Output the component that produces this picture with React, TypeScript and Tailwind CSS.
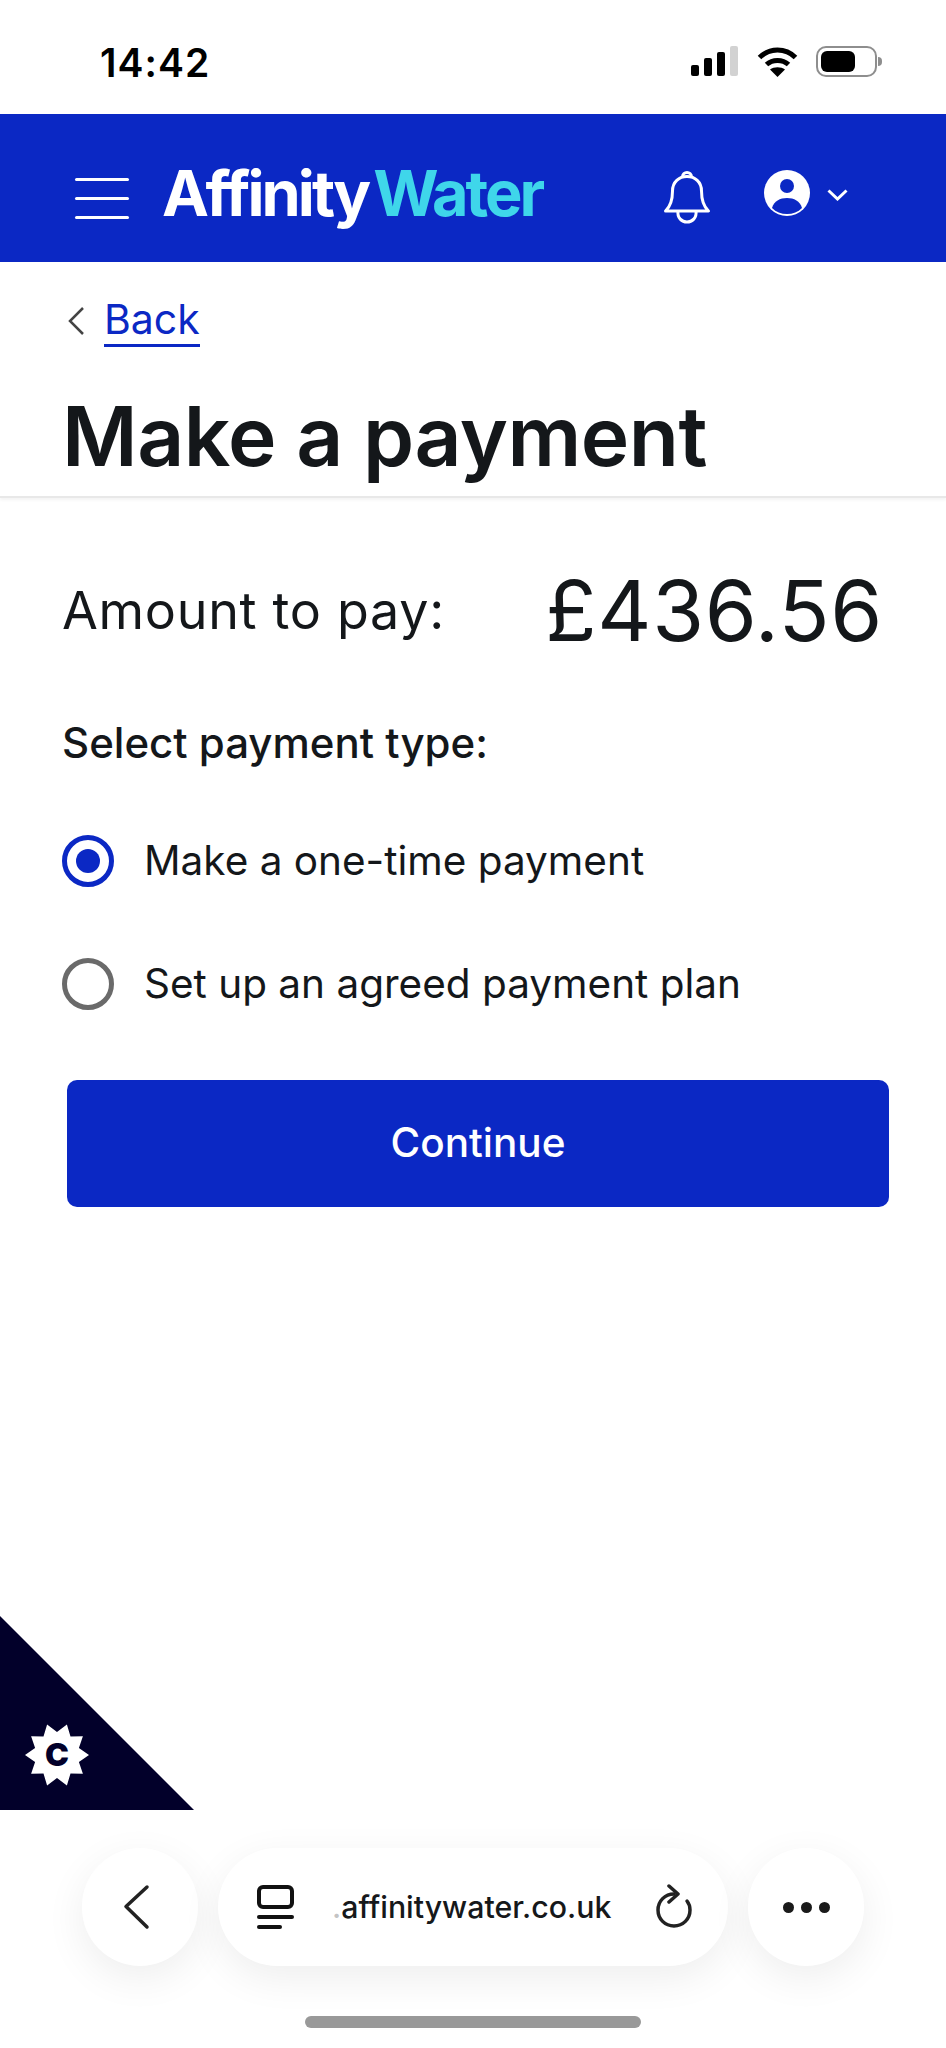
const starPoints = Array.from({ length: 20 }, (_, i) => {
  const r = i % 2 === 0 ? 32 : 23;
  const a = (i * Math.PI) / 10;
  return `${(34 + r * Math.cos(a)).toFixed(1)},${(34 + r * Math.sin(a)).toFixed(1)}`;
}).join(" ");

const StatusBar = () => (
  <div className="flex h-[114px] items-center justify-between pl-[100px] pr-[64px] pt-[8px]">
    <span className="mt-[2px] text-[39px] font-semibold leading-none tracking-[1px] text-black">14:42</span>
    <div className="flex items-center">
      {/* signal */}
      <div className="flex h-[30px] items-end gap-[5px]">
        <div className="h-[11px] w-[8px] rounded-[2px] bg-black" />
        <div className="h-[18px] w-[8px] rounded-[2px] bg-black" />
        <div className="h-[24px] w-[8px] rounded-[2px] bg-black" />
        <div className="h-[30px] w-[8px] rounded-[2px] bg-[#d2d2d2]" />
      </div>
      {/* wifi */}
      <svg width="41" height="31" viewBox="0 0 41 31" className="ml-[19px]" fill="none">
        <path d="M2.5 11.5C12.5 1.5 28.5 1.5 38.5 11.5" stroke="#000" strokeWidth="5" />
        <path d="M9.5 18.5C15.5 13 25.5 13 31.5 18.5" stroke="#000" strokeWidth="5" />
        <path d="M13 23.5C17 20.5 24 20.5 28 23.5L20.5 31Z" fill="#000" />
      </svg>
      {/* battery */}
      <div className="ml-[18px] flex items-center">
        <div className="flex h-[31px] w-[61px] items-center rounded-[10px] border-[2px] border-[#8e8e8e] p-[3px]">
          <div className="h-[21px] w-[34px] rounded-[6px] bg-black" />
        </div>
        <div className="ml-[1px] h-[9px] w-[4px] rounded-r-full bg-[#8e8e8e]" />
      </div>
    </div>
  </div>
);

const Header = () => (
  <header className="flex h-[148px] items-center bg-[#0b28c4] pl-[75px] pt-[10px]">
    <div className="mt-[10px] flex w-[54px] flex-col gap-[16px]">
      <div className="h-[3px] rounded-full bg-white" />
      <div className="h-[3px] rounded-full bg-white" />
      <div className="h-[3px] rounded-full bg-white" />
    </div>
    <div className="ml-[33px] flex text-[63px] font-bold leading-none tracking-[-3px]">
      <span className="text-white">Affinity</span>
      <span className="ml-[5px] text-[#3fd6ea]">Water</span>
    </div>
    <svg width="48" height="54" viewBox="0 0 48 54" fill="none" stroke="#fff" strokeWidth="3" className="ml-[121px] mt-[8px]">
      <path d="M2.5 41C8 36 9.5 29 9.5 21C9.5 12 16 6.5 24 6.5C32 6.5 38.5 12 38.5 21C38.5 29 40 36 45.5 41Z" strokeLinejoin="round" />
      <path d="M19.5 7C19.5 1 28.5 1 28.5 7" />
      <path d="M15 41C14 48 19 52 24 52C29 52 34 48 33 41" />
    </svg>
    <svg width="46" height="46" viewBox="0 0 46 46" className="ml-[53px]">
      <circle cx="23" cy="23" r="23" fill="#fff" />
      <circle cx="23" cy="16" r="7" fill="#0b28c4" />
      <path d="M8 38C10 31 16 28 23 28C30 28 36 31 38 38C34 42 29 44 23 44C17 44 12 42 8 38Z" fill="#0b28c4" />
    </svg>
    <svg width="21" height="12" viewBox="0 0 21 12" fill="none" stroke="#fff" strokeWidth="3" className="ml-[17px] mt-[4px]">
      <path d="M1.5 1.5L10.5 10L19.5 1.5" />
    </svg>
  </header>
);

const Radio = ({ checked, label }: { checked?: boolean; label: string }) => (
  <div className="flex items-center">
    <div
      className={`flex h-[52px] w-[52px] items-center justify-center rounded-full border-[5px] ${
        checked ? "border-[#0b28c4]" : "border-[#6a6a6a]"
      }`}
    >
      {checked && <div className="h-[24px] w-[24px] rounded-full bg-[#0b28c4]" />}
    </div>
    <span className="ml-[30px] text-[40.5px] leading-[52px] text-[#14171a]">{label}</span>
  </div>
);

const BrowserBar = () => (
  <div className="absolute inset-x-0 bottom-0 flex h-[200px] flex-col items-center">
    <div className="flex h-[118px] items-stretch gap-[20px]">
      <div className="flex w-[116px] items-center justify-center rounded-full bg-white shadow-[0_12px_40px_rgba(0,0,0,0.07)]">
        <svg width="30" height="46" viewBox="0 0 30 46" fill="none" stroke="#222" strokeWidth="3.5" strokeLinecap="round" strokeLinejoin="round" className="mr-[8px]">
          <path d="M26 3L5 22.5L26 43" />
        </svg>
      </div>
      <div className="flex w-[510px] items-center rounded-full bg-white pl-[39px] shadow-[0_12px_40px_rgba(0,0,0,0.07)]">
        <div className="flex w-[37px] flex-col">
          <div className="h-[24px] rounded-[6px] border-[4px] border-[#111]" />
          <div className="mt-[6px] h-[4px] rounded-full bg-[#111]" />
          <div className="mt-[6px] h-[4px] w-[25px] rounded-full bg-[#111]" />
        </div>
        <span className="ml-[38px] w-[281px] text-[30.3px] font-medium leading-none text-[#16181a]">
          <span className="text-[#c4c4c4]">.</span>affinitywater.co.uk
        </span>
        <svg width="40" height="46" viewBox="0 0 40 46" fill="none" stroke="#222" strokeWidth="3.5" strokeLinecap="round" strokeLinejoin="round" className="ml-[41px]">
          <path d="M20 10C11 10 4 17 4 26C4 35 11 42 20 42C29 42 36 35 36 26C36 22.5 35 19.5 33 17" />
          <path d="M15 2L24 10L15 18" />
        </svg>
      </div>
      <div className="flex w-[116px] items-center justify-center gap-[7px] rounded-full bg-white shadow-[0_12px_40px_rgba(0,0,0,0.07)]">
        <div className="h-[11px] w-[11px] rounded-full bg-[#1a1a1a]" />
        <div className="h-[11px] w-[11px] rounded-full bg-[#1a1a1a]" />
        <div className="h-[11px] w-[11px] rounded-full bg-[#1a1a1a]" />
      </div>
    </div>
    <div className="mt-[50px] h-[12px] w-[336px] rounded-full bg-[#999999]" />
  </div>
);

const App = () => {
  return (
    <div className="relative h-[2048px] w-[946px] overflow-hidden bg-white font-['Inter',sans-serif] text-[#14171a]">
      <StatusBar />
      <Header />

      {/* Page title */}
      <div className="h-[236px] border-b-[2px] border-[#e8e8e8] px-[62px] pt-[32px] shadow-[0_2px_3px_rgba(0,0,0,0.05)]">
        <div className="flex items-center">
          <svg width="18" height="30" viewBox="0 0 18 30" fill="none" stroke="#444" strokeWidth="2.5" className="ml-[5px]">
            <path d="M16 2L3 15L16 28" />
          </svg>
          <a className="ml-[19px] border-b-[3px] border-[#0b28c4] text-[41px] leading-[50px] text-[#0b28c4]">Back</a>
        </div>
        <h1 className="mt-[44px] text-[82px] font-semibold leading-[92px] tracking-[-0.5px]">Make a payment</h1>
      </div>

      <main className="px-[62px]">
        <div className="mt-[75px] flex items-center justify-between pr-[1px]">
          <span className="text-[52px] leading-[76px] tracking-[0.7px]">Amount to pay:</span>
          <span className="text-[84px] leading-[76px] tracking-[0.7px]">£436.56</span>
        </div>
        <p className="mt-[68px] text-[42px] font-medium leading-[52px]">Select payment type:</p>
        <div className="mt-[66px] flex flex-col gap-[71px]">
          <Radio checked label="Make a one-time payment" />
          <Radio label="Set up an agreed payment plan" />
        </div>
        <button className="ml-[5px] mt-[70px] flex h-[127px] w-[822px] items-center justify-center rounded-[10px] bg-[#0b28c4] text-[40.5px] font-medium text-white">
          Continue
        </button>
      </main>

      {/* Cookie badge */}
      <div className="absolute bottom-[238px] left-0 h-[194px] w-[194px] bg-[#02002a] [clip-path:polygon(0_0,0_100%,100%_100%)]">
        <div className="absolute left-[23px] top-[105px] flex h-[68px] w-[68px] items-center justify-center">
          <svg width="68" height="68" viewBox="0 0 68 68" className="absolute inset-0">
            <polygon points={starPoints} fill="#fff" />
          </svg>
          <span className="relative text-[32px] font-black leading-none text-[#02002a]">C</span>
        </div>
      </div>

      <BrowserBar />
    </div>
  );
};

export default App;
